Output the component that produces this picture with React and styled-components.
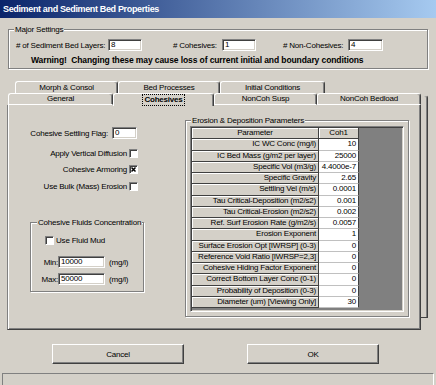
import React from "react";
import styled, { createGlobalStyle } from "styled-components";

const GlobalStyle = createGlobalStyle`
  html, body { margin: 0; padding: 0; background: #d4d0c8; }
  body {
    font-family: "Liberation Sans", Arial, sans-serif;
    font-size: 8px;
    letter-spacing: -0.2px;
    color: #000;
  }
  * { box-sizing: border-box; }
`;

const Window = styled.div`
  width: 436px;
  height: 385px;
  overflow: hidden;
  background: #d4d0c8;
  display: flex;
  flex-direction: column;
`;

const TitleBar = styled.div`
  height: 18px;
  flex: none;
  background: linear-gradient(to right, #0a246a, #a6caf0);
  color: #fff;
  font-weight: bold;
  font-size: 9px;
  letter-spacing: -0.35px;
  display: flex;
  align-items: center;
  padding-left: 3px;
`;

const GroupBox = styled.div`
  flex: none;
  border: 1px solid #808080;
  box-shadow: inset 1px 1px 0 #fff, 1px 1px 0 #fff;
  margin: ${(p) => p.$margin || "0"};
  width: ${(p) => p.$w}px;
  height: ${(p) => p.$h}px;
  display: flex;
  flex-direction: column;
  align-items: flex-start;
`;

const Legend = styled.div`
  margin: -6px 0 0 ${(p) => p.$left || 5}px;
  padding: 0 1px;
  background: #d4d0c8;
  line-height: 11px;
  height: 11px;
  white-space: nowrap;
`;

const FieldRow = styled.div`
  display: flex;
  align-items: center;
  height: 12px;
  margin: ${(p) => p.$margin || "0"};
`;

const Caption = styled.span`
  display: inline-block;
  width: ${(p) => (p.$w ? `${p.$w}px` : "auto")};
  margin-left: ${(p) => p.$ml || 0}px;
  margin-right: ${(p) => p.$mr || 0}px;
  text-align: ${(p) => p.$align || "left"};
  white-space: nowrap;
  line-height: 11px;
`;

const TextBox = styled.div`
  width: ${(p) => p.$w}px;
  height: 12px;
  flex: none;
  background: #fff;
  border-style: solid;
  border-width: 1px;
  border-color: #808080 #fff #fff #808080;
  box-shadow: inset 1px 1px 0 #404040, inset -1px -1px 0 #d4d0c8;
  padding: 0 2px;
  line-height: 10px;
  margin-right: ${(p) => p.$mr || 0}px;
  white-space: nowrap;
`;

const Warning = styled.div`
  font-weight: bold;
  font-size: 8.5px;
  letter-spacing: -0.1px;
  line-height: 11px;
  margin: 4px 0 0 22px;
  white-space: nowrap;
`;

const TabArea = styled.div`
  flex: none;
  margin: 12px 0 0 0;
  display: flex;
  flex-direction: column;
`;

const TabRow = styled.div`
  display: flex;
  height: 12px;
  padding-left: ${(p) => p.$pl}px;
`;

const Tab = styled.div`
  width: ${(p) => p.$w}px;
  height: ${(p) => (p.$active ? 13 : 12)}px;
  flex: none;
  border-top: 1px solid #fff;
  border-left: 1px solid #fff;
  border-right: 1px solid #404040;
  border-bottom: ${(p) => (p.$front && !p.$active ? "1px solid #fff" : "none")};
  box-shadow: inset -1px 0 0 #808080;
  border-radius: 3px 3px 0 0;
  background: #d4d0c8;
  display: flex;
  align-items: center;
  justify-content: center;
  line-height: 10px;
  font-weight: ${(p) => (p.$active ? "bold" : "normal")};
  position: ${(p) => (p.$active ? "relative" : "static")};
  z-index: ${(p) => (p.$active ? 1 : "auto")};
  padding-bottom: ${(p) => (p.$active ? 1 : 0)}px;
`;

const FocusText = styled.span`
  outline: 1px dotted #000;
  padding: 0 1px;
`;

const FrontBlock = styled.div`
  display: flex;
  margin-left: 7px;
`;

const MainCol = styled.div`
  width: 414px;
  display: flex;
  flex-direction: column;
`;

const SideStrip = styled.div`
  width: 7px;
  height: 223px;
  margin-top: 2px;
  border-top: 1px solid #d4d0c8;
  border-right: 1px solid #404040;
  border-bottom: 1px solid #404040;
  box-shadow: inset -1px 0 0 #808080;
  border-radius: 0 3px 0 0;
`;

const Panel = styled.div`
  height: 225px;
  border-left: 1px solid #808080;
  border-right: 1px solid #404040;
  border-bottom: 1px solid #404040;
  box-shadow: inset 1px 0 0 #fff, inset -1px -1px 0 #808080;
  display: flex;
  align-items: flex-start;
`;

const LeftCol = styled.div`
  width: 177px;
  flex: none;
  display: flex;
  flex-direction: column;
`;

const SettingsList = styled.div`
  margin: 22px 0 0 22px;
  width: 108px;
  display: flex;
  flex-direction: column;
  align-items: flex-end;
  gap: 4.5px;
`;

const SettingRow = styled.div`
  display: flex;
  align-items: center;
  height: 12px;
  margin-bottom: ${(p) => p.$mb || 0}px;
`;

const CheckBox = styled.div`
  width: 9px;
  height: 9px;
  flex: none;
  background: #fff;
  border-style: solid;
  border-width: 1px;
  border-color: #808080 #fff #fff #808080;
  box-shadow: inset 1px 1px 0 #404040;
  margin-left: ${(p) => p.$ml || 0}px;
  margin-right: ${(p) => p.$mr || 0}px;
  display: flex;
  align-items: center;
  justify-content: center;
`;

const CheckMark = () => (
  <svg width="7" height="7" viewBox="0 0 7 7">
    <path d="M1.5 1.5 L5.5 5.5 M5.5 1.5 L1.5 5.5" stroke="#000" strokeWidth="1.5" />
  </svg>
);

const Unit = styled.span`
  margin-left: 4px;
  line-height: 11px;
`;

const Grid = styled.div`
  margin: 0 0 0 4px;
  width: 214px;
  height: 186px;
  border-style: solid;
  border-width: 1px;
  border-color: #808080 #fff #fff #808080;
  box-shadow: inset 1px 1px 0 #404040, inset -1px -1px 0 #d4d0c8;
  padding: 1px;
`;

const GridInner = styled.div`
  width: 100%;
  height: 100%;
  background: #808080;
  display: grid;
  grid-template-columns: 127px 40px;
  grid-auto-rows: 11.25px;
  align-content: start;
`;

const FixedCell = styled.div`
  background: #d4d0c8;
  border-right: 1px solid #404040;
  border-bottom: 1px solid #404040;
  box-shadow: inset 1px 1px 0 #fff;
  text-align: ${(p) => (p.$center ? "center" : "right")};
  padding: 0 2px;
  line-height: 10.25px;
  white-space: nowrap;
  overflow: hidden;
`;

const ValueCell = styled.div`
  background: #fff;
  border-right: 1px solid #404040;
  border-bottom: 1px solid #c0c0c0;
  text-align: right;
  padding: 0 2px;
  line-height: 10.25px;
  white-space: nowrap;
  overflow: hidden;
`;

const ButtonRow = styled.div`
  display: flex;
  gap: 63px;
  margin: 14px 0 0 52px;
`;

const Button = styled.div`
  width: 132px;
  height: 20px;
  border-style: solid;
  border-width: 1px;
  border-color: #fff #404040 #404040 #fff;
  box-shadow: inset -1px -1px 0 #808080;
  display: flex;
  align-items: center;
  justify-content: center;
  line-height: 11px;
`;

const StatusBar = styled.div`
  margin: 9px 0 0 2px;
  width: 432px;
  height: 13px;
  flex: none;
  border-top: 1px solid #808080;
  border-left: 1px solid #808080;
  border-right: 1px solid #fff;
`;

const params = [
  ["IC WC Conc (mg/l)", "10"],
  ["IC Bed Mass (g/m2 per layer)", "25000"],
  ["Specific Vol (m3/g)", "4.4000e-7"],
  ["Specific Gravity", "2.65"],
  ["Settling Vel (m/s)", "0.0001"],
  ["Tau Critical-Deposition (m2/s2)", "0.001"],
  ["Tau Critical-Erosion (m2/s2)", "0.002"],
  ["Ref. Surf Erosion Rate (g/m2/s)", "0.0057"],
  ["Erosion Exponent", "1"],
  ["Surface Erosion Opt [IWRSP] (0-3)", "0"],
  ["Reference Void Ratio [IWRSP=2,3]", "0"],
  ["Cohesive Hiding Factor Exponent", "0"],
  ["Correct Bottom Layer Conc (0-1)", "0"],
  ["Probability of Deposition (0-3)", "0"],
  ["Diameter (um) [Viewing Only]", "30"],
];

export default function App() {
  return (
    <Window>
      <GlobalStyle />
      <TitleBar>Sediment and Sediment Bed Properties</TitleBar>

      <GroupBox $margin="11px 0 0 8px" $w={420} $h={40}>
        <Legend>Major Settings</Legend>
        <FieldRow $margin="4px 0 0 7px">
          <Caption $w={92}># of Sediment Bed Layers:</Caption>
          <TextBox $w={34}>8</TextBox>
          <Caption $ml={31} $w={49}># Cohesives:</Caption>
          <TextBox $w={34}>1</TextBox>
          <Caption $ml={27} $w={65}># Non-Cohesives:</Caption>
          <TextBox $w={35}>4</TextBox>
        </FieldRow>
        <Warning>Warning!&nbsp; Changing these may cause loss of current initial and boundary conditions</Warning>
      </GroupBox>

      <TabArea>
        <TabRow $pl={15}>
          <Tab $w={103}>Morph &amp; Consol</Tab>
          <Tab $w={102}>Bed Processes</Tab>
          <Tab $w={105}>Initial Conditions</Tab>
        </TabRow>
        <FrontBlock>
          <MainCol>
            <TabRow $pl={1}>
              <Tab $front $w={105}>General</Tab>
              <Tab $front $active $w={101}>
                <FocusText>Cohesives</FocusText>
              </Tab>
              <Tab $front $w={103}>NonCoh Susp</Tab>
              <Tab $front $w={104}>NonCoh Bedload</Tab>
            </TabRow>
            <Panel>
              <LeftCol>
                <SettingsList>
                  <SettingRow $mb={3.5}>
                    <Caption $mr={4}>Cohesive Settling Flag:</Caption>
                    <TextBox $w={25} $mr={1}>0</TextBox>
                  </SettingRow>
                  <SettingRow>
                    <Caption>Apply Vertical Diffusion</Caption>
                    <CheckBox $ml={2} />
                  </SettingRow>
                  <SettingRow>
                    <Caption>Cohesive Armoring</Caption>
                    <CheckBox $ml={2}>
                      <CheckMark />
                    </CheckBox>
                  </SettingRow>
                  <SettingRow>
                    <Caption>Use Bulk (Mass) Erosion</Caption>
                    <CheckBox $ml={2} />
                  </SettingRow>
                </SettingsList>

                <GroupBox $margin="30px 0 0 22px" $w={114} $h={70}>
                  <Legend $left={6}>Cohesive Fluids Concentration</Legend>
                  <FieldRow $margin="6px 0 0 14px">
                    <CheckBox $mr={2} />
                    <Caption>Use Fluid Mud</Caption>
                  </FieldRow>
                  <FieldRow $margin="10px 0 0 0">
                    <Caption $w={27} $align="right">Min:</Caption>
                    <TextBox $w={47}>10000</TextBox>
                    <Unit>(mg/l)</Unit>
                  </FieldRow>
                  <FieldRow $margin="5px 0 0 0">
                    <Caption $w={27} $align="right">Max:</Caption>
                    <TextBox $w={47}>50000</TextBox>
                    <Unit>(mg/l)</Unit>
                  </FieldRow>
                </GroupBox>
              </LeftCol>

              <GroupBox $margin="15px 0 0 0" $w={224} $h={197}>
                <Legend>Erosion &amp; Deposition Parameters</Legend>
                <Grid>
                  <GridInner>
                    <FixedCell $center>Parameter</FixedCell>
                    <FixedCell $center>Coh1</FixedCell>
                    {params.map(([name, val]) => (
                      <React.Fragment key={name}>
                        <FixedCell>{name}</FixedCell>
                        <ValueCell>{val}</ValueCell>
                      </React.Fragment>
                    ))}
                  </GridInner>
                </Grid>
              </GroupBox>
            </Panel>
          </MainCol>
          <SideStrip />
        </FrontBlock>
      </TabArea>

      <ButtonRow>
        <Button>Cancel</Button>
        <Button>OK</Button>
      </ButtonRow>
      <StatusBar />
    </Window>
  );
}
